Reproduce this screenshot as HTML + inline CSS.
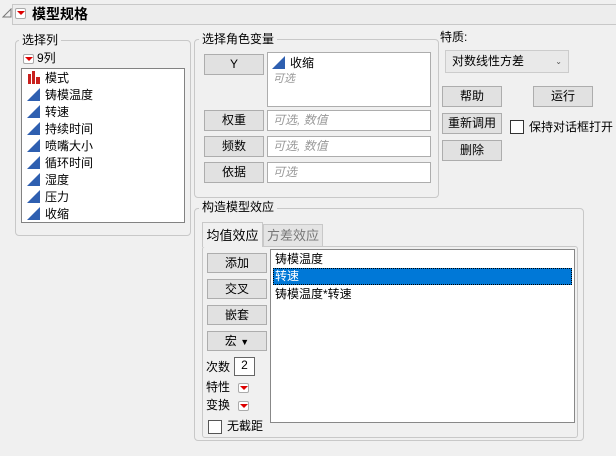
<!DOCTYPE html>
<html><head><meta charset="utf-8"><style>
*{box-sizing:border-box;margin:0;padding:0}
body{width:616px;height:456px;background:#f0f0f0;font-family:"Liberation Sans","Noto Sans CJK SC",sans-serif;font-size:12px;color:#000;position:relative;overflow:hidden}
.a{position:absolute}
.grp{position:absolute;border:1px solid #c8c8c8;border-radius:4px}
.lbl{position:absolute;background:#f0f0f0;padding:0 3px;line-height:14px}
.btn{position:absolute;background:#e1e1e1;border:1px solid #adadad;text-align:center;line-height:18px;font-size:12px}
.box{position:absolute;background:#fff;border:1px solid #adadad}
.ph{color:#999;font-style:italic}
.red{position:absolute;width:11px;height:10px;border:1px solid #aaa;background:#fff;border-radius:2px}
.red:after{content:"";position:absolute;left:1px;top:2px;border-left:4px solid transparent;border-right:4px solid transparent;border-top:4px solid #d00}
.tri{display:inline-block;width:14px;height:13px;vertical-align:-2px;margin-right:4px}
.item{position:absolute;left:5px;line-height:17px;white-space:nowrap}
.cb{position:absolute;width:14px;height:14px;border:1px solid #555;background:#fff}
</style></head><body>
<svg class="a" style="left:2px;top:8px" width="10" height="10"><path d="M1 9 L9 1 L9 9 Z" fill="none" stroke="#777"/></svg>
<div class="a" style="left:12px;top:4px;width:604px;height:21px;border:1px solid #c8c8c8;border-right:none;background:#ededed"></div>
<div class="red" style="left:15px;top:8px;width:11px;height:11px"></div>
<div class="a" style="left:32px;top:5px;font-size:14px;font-weight:bold;line-height:18px">模型规格</div>

<div class="grp" style="left:15px;top:40px;width:176px;height:196px"></div>
<div class="lbl" style="left:19px;top:33px">选择列</div>
<div class="red" style="left:23px;top:54px"></div>
<div class="a" style="left:37px;top:51px;line-height:14px">9列</div>
<div class="box" style="left:21px;top:68px;width:164px;height:155px;border-color:#828282">
<div class="item" style="top:1px"><svg class="tri" viewBox="0 0 14 13"><rect x="1" y="3" width="3" height="10" fill="#c8201e"/><rect x="5" y="0" width="3" height="13" fill="#c8201e"/><rect x="9" y="6" width="4" height="7" fill="#c8201e"/></svg>模式</div>
<div class="item" style="top:18px"><svg class="tri" viewBox="0 0 14 13"><path d="M0 13 L13 0 L13 13Z" fill="#2e5fb0"/></svg>铸模温度</div>
<div class="item" style="top:35px"><svg class="tri" viewBox="0 0 14 13"><path d="M0 13 L13 0 L13 13Z" fill="#2e5fb0"/></svg>转速</div>
<div class="item" style="top:52px"><svg class="tri" viewBox="0 0 14 13"><path d="M0 13 L13 0 L13 13Z" fill="#2e5fb0"/></svg>持续时间</div>
<div class="item" style="top:69px"><svg class="tri" viewBox="0 0 14 13"><path d="M0 13 L13 0 L13 13Z" fill="#2e5fb0"/></svg>喷嘴大小</div>
<div class="item" style="top:86px"><svg class="tri" viewBox="0 0 14 13"><path d="M0 13 L13 0 L13 13Z" fill="#2e5fb0"/></svg>循环时间</div>
<div class="item" style="top:103px"><svg class="tri" viewBox="0 0 14 13"><path d="M0 13 L13 0 L13 13Z" fill="#2e5fb0"/></svg>湿度</div>
<div class="item" style="top:120px"><svg class="tri" viewBox="0 0 14 13"><path d="M0 13 L13 0 L13 13Z" fill="#2e5fb0"/></svg>压力</div>
<div class="item" style="top:137px"><svg class="tri" viewBox="0 0 14 13"><path d="M0 13 L13 0 L13 13Z" fill="#2e5fb0"/></svg>收缩</div>
</div>

<div class="grp" style="left:194px;top:39px;width:245px;height:159px"></div>
<div class="lbl" style="left:199px;top:32px">选择角色变量</div>
<div class="btn" style="left:204px;top:54px;width:60px;height:21px">Y</div>
<div class="box" style="left:267px;top:52px;width:164px;height:55px">
<div class="item" style="top:2px;left:4px"><svg class="tri" viewBox="0 0 14 13"><path d="M0 13 L13 0 L13 13Z" fill="#2e5fb0"/></svg>收缩</div>
<div class="item ph" style="top:18px;left:5px;font-size:11px">可选</div></div>
<div class="btn" style="left:204px;top:110px;width:60px;height:21px">权重</div>
<div class="box ph" style="left:267px;top:110px;width:164px;height:21px;padding-left:5px;line-height:19px">可选, 数值</div>
<div class="btn" style="left:204px;top:136px;width:60px;height:21px">频数</div>
<div class="box ph" style="left:267px;top:136px;width:164px;height:21px;padding-left:5px;line-height:19px">可选, 数值</div>
<div class="btn" style="left:204px;top:162px;width:60px;height:21px">依据</div>
<div class="box ph" style="left:267px;top:162px;width:164px;height:21px;padding-left:5px;line-height:19px">可选</div>

<div class="a" style="left:440px;top:30px;line-height:14px">特质:</div>
<div class="a" style="left:445px;top:50px;width:124px;height:23px;background:#e9e9e9;border:1px solid #ccc;padding-left:6px;line-height:21px">对数线性方差<span style="position:absolute;right:6px;top:0;font-size:8px;color:#555">⌄</span></div>
<div class="btn" style="left:442px;top:86px;width:60px;height:21px">帮助</div>
<div class="btn" style="left:533px;top:86px;width:60px;height:21px">运行</div>
<div class="btn" style="left:442px;top:113px;width:60px;height:21px">重新调用</div>
<div class="cb" style="left:510px;top:120px;border-color:#333"></div>
<div class="a" style="left:529px;top:119px;line-height:16px">保持对话框打开</div>
<div class="btn" style="left:442px;top:140px;width:60px;height:21px">删除</div>

<div class="grp" style="left:194px;top:208px;width:390px;height:233px"></div>
<div class="lbl" style="left:199px;top:200px">构造模型效应</div>
<div class="a" style="left:202px;top:246px;width:376px;height:192px;border:1px solid #c8c8c8;border-radius:3px"></div>
<div class="a" style="left:202px;top:222px;width:61px;height:25px;background:#f0f0f0;border:1px solid #c8c8c8;border-bottom:none;line-height:25px;text-align:center;font-size:13px">均值效应</div>
<div class="a" style="left:263px;top:224px;width:60px;height:22px;background:#e4e4e4;border:1px solid #c8c8c8;border-bottom:none;line-height:22px;text-align:center;font-size:13px;color:#777">方差效应</div>
<div class="btn" style="left:207px;top:253px;width:60px;height:20px">添加</div>
<div class="btn" style="left:207px;top:279px;width:60px;height:20px">交叉</div>
<div class="btn" style="left:207px;top:305px;width:60px;height:20px">嵌套</div>
<div class="btn" style="left:207px;top:331px;width:60px;height:20px">宏 <span style="font-size:9px">▼</span></div>
<div class="a" style="left:206px;top:359px;line-height:16px">次数</div>
<div class="box" style="left:234px;top:357px;width:21px;height:19px;text-align:center;line-height:15px;border-color:#666">2</div>
<div class="a" style="left:206px;top:379px;line-height:16px">特性</div>
<div class="red" style="left:238px;top:383px"></div>
<div class="a" style="left:206px;top:397px;line-height:16px">变换</div>
<div class="red" style="left:238px;top:401px"></div>
<div class="cb" style="left:208px;top:420px"></div>
<div class="a" style="left:227px;top:418px;line-height:16px">无截距</div>
<div class="box" style="left:270px;top:249px;width:305px;height:174px;border-color:#888">
<div class="item" style="top:1px;left:4px">铸模温度</div>
<div class="a" style="left:2px;top:18px;width:299px;height:17px;background:#0078d7;border:1px dotted #000;color:#fff;line-height:15px;padding-left:1px">转速</div>
<div class="item" style="top:36px;left:4px">铸模温度*转速</div>
</div>
</body></html>
